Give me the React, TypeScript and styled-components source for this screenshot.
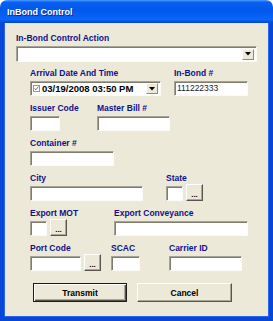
import React from 'react';
import styled, { createGlobalStyle } from 'styled-components';

const GlobalStyle = createGlobalStyle`
  html, body {
    margin: 0;
    padding: 0;
    background: #ffffff;
  }
  body {
    font-family: "Liberation Sans", Arial, sans-serif;
  }
`;

const Window = styled.div`
  width: 273px;
  height: 321px;
  display: flex;
  flex-direction: column;
`;

const TitleBar = styled.div`
  height: 23px;
  flex: none;
  display: flex;
  align-items: center;
  padding-left: 7px;
  border-radius: 7px 7px 0 0;
  background: linear-gradient(
    180deg,
    #4a9cff 0%,
    #0a5ff0 10%,
    #0058ec 45%,
    #0a66f8 85%,
    #0052de 95%,
    #003dd0 100%
  );
  color: #ffffff;
  font-size: 9px;
  font-weight: bold;
  text-shadow: 1px 1px 0 #0b2a8a;
`;

const Body = styled.div`
  flex: 1;
  background: #ece9d8;
  border: 4px solid #0846d8;
  border-top: none;
  box-shadow: inset 1px 0 0 #2c64e8, inset -1px -1px 0 #2c64e8;
  padding: 10px 0 0 12px;
  display: flex;
  flex-direction: column;
`;

const Label = styled.div`
  height: 11px;
  line-height: 11px;
  margin-bottom: 2px;
  font-size: 8.5px;
  font-weight: bold;
  color: #10108e;
  white-space: nowrap;
`;

const Rows = styled.div`
  display: flex;
  flex-direction: column;
  gap: 7px;
  margin-top: 6px;
  padding-left: 14px;
`;

const Row = styled.div`
  display: flex;
  align-items: flex-start;
`;

const Field = styled.div<{ $w?: number }>`
  flex: none;
  width: ${(p) => (p.$w ? `${p.$w}px` : 'auto')};
`;

const Group = styled.div`
  display: flex;
  align-items: flex-end;
  height: 15px;
  gap: 3px;
`;

const sunken = `
  box-sizing: border-box;
  background: #ffffff;
  border: 1px solid;
  border-color: #a5a296 #fbfbf7 #fbfbf7 #a5a296;
  box-shadow: inset 1px 1px 0 #7f7c70;
`;

const Input = styled.div<{ $w: number }>`
  ${sunken}
  width: ${(p) => p.$w}px;
  height: 15px;
  flex: none;
  padding: 0 2px;
  font-size: 8.5px;
  line-height: 13px;
  color: #1a1a1a;
`;

const Combo = styled.div`
  ${sunken}
  width: 241px;
  height: 16px;
  display: flex;
  justify-content: flex-end;
  align-items: center;
  padding-right: 2px;
`;

const DatePicker = styled.div`
  ${sunken}
  width: 131px;
  height: 15px;
  display: flex;
  align-items: center;
  padding: 0 2px 0 2px;
  gap: 2px;
`;

const DateText = styled.span`
  flex: 1;
  font-size: 9.5px;
  font-weight: bold;
  color: #000000;
  white-space: nowrap;
`;

const DropBtn = styled.div`
  box-sizing: border-box;
  width: 12px;
  height: 11px;
  background: #ece9d8;
  border: 1px solid;
  border-color: #ffffff #8e8b80 #8e8b80 #ffffff;
  display: flex;
  align-items: center;
  justify-content: center;
`;

const raised = `
  box-sizing: border-box;
  background: #ece9d8;
  border: 1px solid;
  border-color: #ffffff #57554e #57554e #ffffff;
  box-shadow: inset -1px -1px 0 #aca899;
`;

const DotsBtn = styled.div`
  ${raised}
  width: 17px;
  height: 17px;
  flex: none;
  display: flex;
  align-items: flex-end;
  justify-content: center;
  font-size: 8px;
  font-weight: bold;
  line-height: 10px;
  color: #000000;
`;

const Actions = styled.div`
  display: flex;
  gap: 10px;
  margin-top: 12px;
  padding-left: 17px;
`;

const Button = styled.div<{ $w: number; $primary?: boolean }>`
  box-sizing: border-box;
  width: ${(p) => p.$w}px;
  height: 19px;
  background: #ece9d8;
  display: flex;
  align-items: center;
  justify-content: center;
  font-size: 8.5px;
  font-weight: bold;
  color: #000000;
  border: 1px solid;
  border-color: ${(p) => (p.$primary ? '#1c1c1c' : '#ffffff #57554e #57554e #ffffff')};
  box-shadow: ${(p) =>
    p.$primary
      ? 'inset 1px 1px 0 #ffffff, inset -1px -1px 0 #57554e, inset -2px -2px 0 #aca899'
      : 'inset -1px -1px 0 #aca899'};
`;

const Arrow = () => (
  <svg width="6" height="4" viewBox="0 0 6 4">
    <path d="M0 0h6L3 3.5z" fill="#000" />
  </svg>
);

const Check = () => (
  <svg width="7" height="7" viewBox="0 0 7 7">
    <rect x="0.5" y="0.5" width="6" height="6" fill="#fff" stroke="#9a978c" />
    <path d="M1.6 3.4l1.2 1.4L5.4 1.6" fill="none" stroke="#444" strokeWidth="0.8" />
  </svg>
);

export default function App() {
  return (
    <>
      <GlobalStyle />
      <Window>
        <TitleBar>InBond Control</TitleBar>
        <Body>
          <Label>In-Bond Control Action</Label>
          <Combo>
            <DropBtn>
              <Arrow />
            </DropBtn>
          </Combo>
          <Rows>
            <Row>
              <Field $w={144}>
                <Label>Arrival Date And Time</Label>
                <DatePicker>
                  <Check />
                  <DateText>03/19/2008 03:50 PM</DateText>
                  <DropBtn>
                    <Arrow />
                  </DropBtn>
                </DatePicker>
              </Field>
              <Field>
                <Label>In-Bond #</Label>
                <Input $w={74}>111222333</Input>
              </Field>
            </Row>
            <Row>
              <Field $w={67}>
                <Label>Issuer Code</Label>
                <Input $w={30} />
              </Field>
              <Field>
                <Label>Master Bill #</Label>
                <Input $w={73} />
              </Field>
            </Row>
            <Row>
              <Field>
                <Label>Container #</Label>
                <Input $w={84} />
              </Field>
            </Row>
            <Row>
              <Field $w={136}>
                <Label>City</Label>
                <Input $w={113} />
              </Field>
              <Field>
                <Label>State</Label>
                <Group>
                  <Input $w={17} />
                  <DotsBtn>...</DotsBtn>
                </Group>
              </Field>
            </Row>
            <Row>
              <Field $w={84}>
                <Label>Export MOT</Label>
                <Group>
                  <Input $w={17} />
                  <DotsBtn>...</DotsBtn>
                </Group>
              </Field>
              <Field>
                <Label>Export Conveyance</Label>
                <Input $w={134} />
              </Field>
            </Row>
            <Row>
              <Field $w={81}>
                <Label>Port Code</Label>
                <Group>
                  <Input $w={51} />
                  <DotsBtn>...</DotsBtn>
                </Group>
              </Field>
              <Field $w={58}>
                <Label>SCAC</Label>
                <Input $w={29} />
              </Field>
              <Field>
                <Label>Carrier ID</Label>
                <Input $w={73} />
              </Field>
            </Row>
          </Rows>
          <Actions>
            <Button $w={94} $primary>
              Transmit
            </Button>
            <Button $w={95}>Cancel</Button>
          </Actions>
        </Body>
      </Window>
    </>
  );
}
